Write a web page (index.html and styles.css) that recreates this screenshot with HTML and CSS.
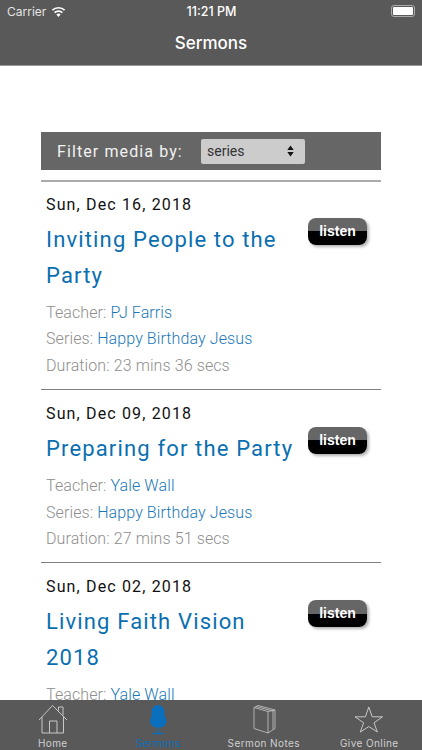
FILE: index.html
```html
<!DOCTYPE html>
<html lang="en">
<head>
<meta charset="utf-8">
<title>Sermons</title>
<link rel="stylesheet" href="styles.css">
</head>
<body>
<div class="app">
  <header class="top">
    <div class="status">
      <span class="carrier">Carrier
        <svg class="wifi" width="15" height="11" viewBox="0 0 15 11"><path d="M7.500 11 5.400 8.600a3 3 0 0 1 4.200 0Z" fill="#fff"/><path d="M3.600 6.700a5.600 5.600 0 0 1 7.800 0M1.400 4.200a8.800 8.800 0 0 1 12.200 0" fill="none" stroke="#fff" stroke-width="1.700"/></svg>
      </span>
      <span class="clock">11:21 PM</span>
      <span class="battery"><span class="battery-fill"></span></span>
    </div>
    <div class="navtitle">Sermons</div>
  </header>
  <main class="content">
    <div class="filter">
      <span class="filter-label">Filter media by:</span>
      <span class="select">series
        <svg class="updown" width="7" height="12" viewBox="0 0 7 12"><path d="M3.500 0.500 6.700 5H.3ZM3.500 11.500.3 7h6.400Z" fill="#111"/></svg>
      </span>
    </div>
    <article class="sermon">
      <div class="date">Sun, Dec 16, 2018</div>
      <h2 class="title">Inviting People to the Party</h2>
      <span class="listen">listen</span>
      <div class="meta">
        <div>Teacher: <a>PJ Farris</a></div>
        <div>Series: <a>Happy Birthday Jesus</a></div>
        <div>Duration: 23 mins 36 secs</div>
      </div>
    </article>
    <article class="sermon">
      <div class="date">Sun, Dec 09, 2018</div>
      <h2 class="title">Preparing for the Party</h2>
      <span class="listen">listen</span>
      <div class="meta">
        <div>Teacher: <a>Yale Wall</a></div>
        <div>Series: <a>Happy Birthday Jesus</a></div>
        <div>Duration: 27 mins 51 secs</div>
      </div>
    </article>
    <article class="sermon">
      <div class="date">Sun, Dec 02, 2018</div>
      <h2 class="title">Living Faith Vision 2018</h2>
      <span class="listen">listen</span>
      <div class="meta">
        <div>Teacher: <a>Yale Wall</a></div>
      </div>
    </article>
  </main>
  <nav class="tabs">
    <div class="tab">
      <svg width="32" height="32" viewBox="0 0 32 32" fill="none" stroke="#c8c8c8" stroke-width="1"><path d="M2 16 15.500 1.500 30 16M5 13v16h21.500V13M12.500 29V17H20v12M21.500 6.500V3H26v8.500"/></svg>
      <span>Home</span>
    </div>
    <div class="tab active">
      <svg width="32" height="32" viewBox="0 0 32 32"><rect x="9.500" y="1" width="13" height="16" rx="6.500" fill="#0a6fbd"/><rect x="8" y="10" width="16.500" height="13.500" rx="6.500" fill="#0a6fbd"/><path d="M16 22v7.500M10.500 29.500h11" fill="none" stroke="#0a6fbd" stroke-width="1.300"/></svg>
      <span>Sermons</span>
    </div>
    <div class="tab">
      <svg width="32" height="32" viewBox="0 0 32 32" fill="none" stroke="#c8c8c8" stroke-width=".8"><path d="M6 3.500 20 7.500V29L6 24.500ZM6 3.500 10 1.500 27 6V24.500L20 29M8 2.500 25 7v18.500M20 7.500 27 6"/></svg>
      <span>Sermon Notes</span>
    </div>
    <div class="tab">
      <svg width="32" height="32" viewBox="0 0 32 32" fill="none" stroke="#c8c8c8" stroke-width="1"><path d="M15.800 3 19.200 12.800H29.500L21 18.800 24.300 28 15.800 22.500 7.300 28 10.600 18.800 2 12.800H12.400Z"/></svg>
      <span>Give Online</span>
    </div>
  </nav>
</div>
</body>
</html>
```
FILE: styles.css
```css
* { box-sizing: border-box; }
html, body { margin: 0; height: 100%; }
body { font-family: Roboto, "Liberation Sans", sans-serif; background: #fff; }
.app { width: 422px; height: 750px; display: flex; flex-direction: column; overflow: hidden; }

.top { height: 66px; flex: none; background: #595959; color: #fff; font-family: Inter, "Liberation Sans", sans-serif; border-bottom: 1px solid #9a9a9a; }
.status { height: 22px; padding: 0 7px; display: grid; grid-template-columns: 1fr auto 1fr; align-items: center; font-size: 12px; }
.carrier { display: flex; align-items: center; gap: 5px; color: #e4e4e4; }
.clock { font-size: 12.500px; font-weight: 500; padding-left: 1px; }
.battery { justify-self: end; width: 24px; height: 12px; border: 1px solid #aaa; border-radius: 3px; padding: 1px; }
.battery-fill { display: block; height: 100%; background: #fff; border-radius: 1px; }
.navtitle { text-align: center; font-size: 17px; font-weight: 500; line-height: 42px; }

.content { flex: 1; min-height: 0; overflow: hidden; padding: 66px 41px 0; }
.filter { height: 38px; background: #666; display: flex; align-items: center; padding-left: 16px; color: #f2f2f2; font-size: 16px; letter-spacing: 1.100px; }
.filter-label { width: 144px; }
.select { width: 104px; height: 25px; background: #ccc; border-radius: 2px; color: #333; font-size: 14px; letter-spacing: 0; display: flex; align-items: center; justify-content: space-between; padding: 0 11px 0 6px; }

.sermon { position: relative; border-top: 1px solid #808080; padding: 13px 5px 0; height: 173px; }
.sermon:first-of-type { margin-top: 10px; height: 209px; border-top: 2px solid #aaa; padding-top: 12px; }
.sermon:last-of-type { height: 209px; }
.date { font-size: 16px; letter-spacing: 1.150px; color: #111; line-height: 22px; }
.title { margin: 6px 0 0; width: 255px; font-size: 22px; font-weight: 400; line-height: 35.500px; letter-spacing: 1.150px; color: #0a6fb0; }
.listen { position: absolute; top: 37px; right: 14px; width: 59px; height: 27px; border-radius: 8px; background: linear-gradient(#666 0 50%, #000 50%); color: #fff; font-size: 14px; font-weight: 700; font-family: "Liberation Sans", sans-serif; text-align: center; line-height: 27px; box-shadow: 2px 2px 3px rgba(0,0,0,.3); }
.sermon:first-of-type .listen { top: 36px; }
.meta { margin-top: 6.500px; font-size: 16px; font-weight: 300; letter-spacing: .1px; line-height: 26.500px; color: #8e8e8e; }
.meta a { color: #1a78b8; }

.tabs { height: 50px; flex: none; background: #595959; display: grid; grid-template-columns: repeat(4, 1fr); }
.tab { display: flex; flex-direction: column; align-items: center; padding-top: 4px; font-size: 10px; letter-spacing: .4px; color: #d0d0d0; font-family: Inter, "Liberation Sans", sans-serif; }
.tab span { line-height: 13px; margin-top: 1px; }
.tab.active { color: #0a6fbd; }
```
